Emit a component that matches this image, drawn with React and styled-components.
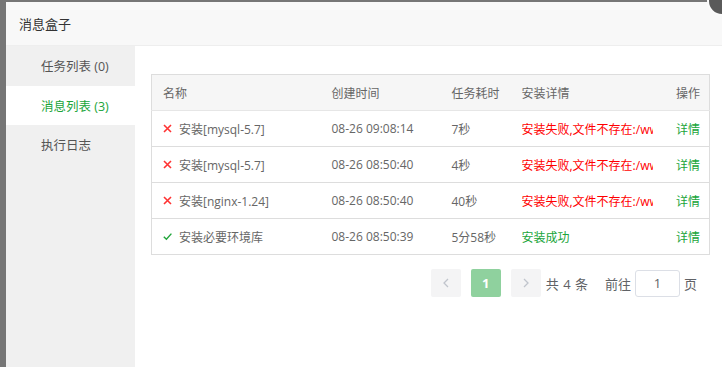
import React from 'react';
import styled, { createGlobalStyle } from 'styled-components';

const GlobalStyle = createGlobalStyle`
    html, body {
        margin: 0;
        padding: 0;
        background: #767676;
        overflow: hidden;
    }
    body {
        font-family: "Open Sans", "Noto Sans CJK SC", sans-serif;
    }
`

const Page = styled.div`
    width: 722px;
    height: 367px;
    padding: 2px 0 0 6px;
    box-sizing: border-box;
    position: relative;
    overflow: hidden;
`

const Dialog = styled.div`
    width: 740px;
    height: 365px;
    background: #fff;
    display: flex;
    flex-direction: column;
`

const Header = styled.div`
    height: 43px;
    flex: 0 0 43px;
    background: #f8f8f8;
    border-bottom: 1px solid #eee;
    display: flex;
    align-items: center;
    padding-left: 13px;
    font-size: 13px;
    color: #333;
`

const CloseDot = styled.div`
    position: absolute;
    top: -14px;
    right: -15px;
    width: 26px;
    height: 26px;
    border-radius: 50%;
    background: #5a5a5a;
    border: 2px solid #fafafa;
`

const Body = styled.div`
    flex: 1;
    display: flex;
    min-height: 0;
`

const Sidebar = styled.div`
    width: 129px;
    flex: 0 0 129px;
    background: #f0f0f0;
    display: flex;
    flex-direction: column;
`

const SideItem = styled.div`
    height: 39.5px;
    display: flex;
    align-items: center;
    padding-left: 35px;
    font-size: 12.5px;
    color: ${props => props.active ? '#20a53a' : '#555'};
    background: ${props => props.active ? '#fff' : 'transparent'};
`

const Content = styled.div`
    width: 587px;
    padding: 28px 13px 0 16px;
    box-sizing: border-box;
`

const Table = styled.table`
    width: 558px;
    table-layout: fixed;
    border-collapse: collapse;
    border: 1px solid #ddd;
    font-size: 12px;
    color: #666;
`

const Th = styled.th`
    height: 35px;
    background: #f6f6f6;
    font-weight: normal;
    white-space: nowrap;
    text-align: ${props => props.right ? 'right' : 'left'};
    padding: ${props => props.right ? '0 9px 0 0' : '0 11px'};
    color: #666;
    border-bottom: 1px solid #e6e6e6;
`

const Td = styled.td`
    height: 35px;
    padding: ${props => props.right ? '0 9px 0 0' : '0 11px'};
    border-top: 1px solid #ddd;
    white-space: nowrap;
    text-align: ${props => props.right ? 'right' : 'left'};
    color: ${props => props.tone === 'error' ? '#ff0000' : props.tone === 'ok' ? '#20a53a' : '#666'};
`

const Clip = styled.span`
    display: block;
    overflow: hidden;
    white-space: nowrap;
`

const NameCell = styled.span`
    display: inline-flex;
    align-items: center;
    gap: 7px;
`

const Link = styled.a`
    color: #20a53a;
    text-decoration: none;
`

const Pager = styled.div`
    display: flex;
    justify-content: flex-end;
    align-items: center;
    margin-top: 14px;
    padding-right: 12px;
    font-size: 13px;
    color: #606266;
`

const PageBtn = styled.button`
    width: 30px;
    height: 28px;
    margin-right: 10px;
    border: none;
    border-radius: 2px;
    padding: 0;
    background: ${props => props.current ? '#8fd19e' : '#f4f4f5'};
    color: ${props => props.current ? '#fff' : '#c0c4cc'};
    font-family: inherit;
    font-size: 13px;
    font-weight: bold;
    display: flex;
    align-items: center;
    justify-content: center;
`

const Total = styled.span`
    margin-left: -5px;
    margin-right: 17px;
    word-spacing: 1px;
`

const JumpInput = styled.div`
    width: 45px;
    height: 27px;
    box-sizing: border-box;
    margin: 0 4px;
    border: 1px solid #dcdfe6;
    border-radius: 3px;
    display: flex;
    align-items: center;
    justify-content: center;
    color: #606266;
`

const CrossIcon = () => (
    <svg width="9" height="9" viewBox="0 0 9 9">
        <path d="M1 1 L8 8 M8 1 L1 8" stroke="#f33" strokeWidth="1.6" />
    </svg>
)

const CheckIcon = () => (
    <svg width="9" height="9" viewBox="0 0 9 9">
        <path d="M0.8 4.8 L3.4 7.3 L8.4 1.6" stroke="#20a53a" strokeWidth="1.4" fill="none" />
    </svg>
)

const Chevron = ({ dir }) => (
    <svg width="8" height="10" viewBox="0 0 8 10">
        <path d={dir === 'left' ? 'M6 1 L2 5 L6 9' : 'M2 1 L6 5 L2 9'} stroke="#c0c4cc" strokeWidth="1.3" fill="none" />
    </svg>
)

const rows = [
    { name: '安装[mysql-5.7]', time: '08-26 09:08:14', cost: '7秒', detail: '安装失败,文件不存在:/www', ok: false },
    { name: '安装[mysql-5.7]', time: '08-26 08:50:40', cost: '4秒', detail: '安装失败,文件不存在:/www', ok: false },
    { name: '安装[nginx-1.24]', time: '08-26 08:50:40', cost: '40秒', detail: '安装失败,文件不存在:/www', ok: false },
    { name: '安装必要环境库', time: '08-26 08:50:39', cost: '5分58秒', detail: '安装成功', ok: true },
]

const App = () => {
    return (
        <>
            <GlobalStyle />
            <Page>
                <Dialog>
                    <Header>消息盒子</Header>
                    <Body>
                        <Sidebar>
                            <SideItem>任务列表 (0)</SideItem>
                            <SideItem active>消息列表 (3)</SideItem>
                            <SideItem>执行日志</SideItem>
                        </Sidebar>
                        <Content>
                            <Table>
                                <colgroup>
                                    <col style={{ width: 169 }} />
                                    <col style={{ width: 120 }} />
                                    <col style={{ width: 70 }} />
                                    <col style={{ width: 153 }} />
                                    <col style={{ width: 46 }} />
                                </colgroup>
                                <thead>
                                    <tr>
                                        <Th>名称</Th>
                                        <Th>创建时间</Th>
                                        <Th>任务耗时</Th>
                                        <Th>安装详情</Th>
                                        <Th right>操作</Th>
                                    </tr>
                                </thead>
                                <tbody>
                                    {rows.map((r, i) => (
                                        <tr key={i}>
                                            <Td>
                                                <NameCell>
                                                    {r.ok ? <CheckIcon /> : <CrossIcon />}
                                                    {r.name}
                                                </NameCell>
                                            </Td>
                                            <Td>{r.time}</Td>
                                            <Td>{r.cost}</Td>
                                            <Td tone={r.ok ? 'ok' : 'error'}><Clip>{r.detail}</Clip></Td>
                                            <Td right><Link href="#">详情</Link></Td>
                                        </tr>
                                    ))}
                                </tbody>
                            </Table>
                            <Pager>
                                <PageBtn><Chevron dir="left" /></PageBtn>
                                <PageBtn current>1</PageBtn>
                                <PageBtn><Chevron dir="right" /></PageBtn>
                                <Total>共 4 条</Total>
                                <span>前往</span>
                                <JumpInput>1</JumpInput>
                                <span>页</span>
                            </Pager>
                        </Content>
                    </Body>
                </Dialog>
                <CloseDot />
            </Page>
        </>
    )
}

export default App;
